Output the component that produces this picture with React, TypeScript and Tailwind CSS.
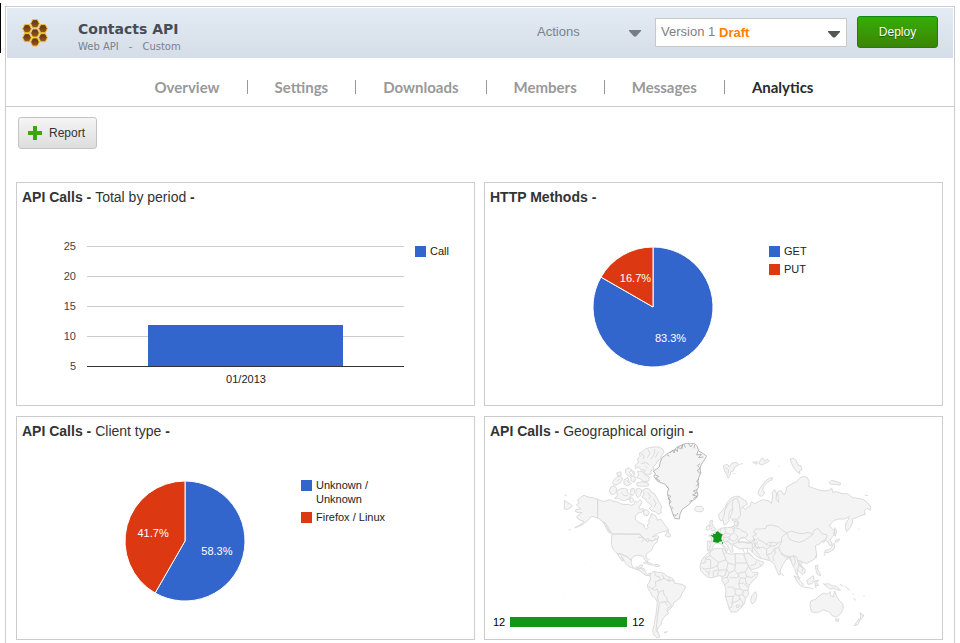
import React from "react";

const BLUE = "#3366cc";
const RED = "#dc3912";

function HoneycombLogo() {
  const cells = [
    [103, 75],
    [79, 90],
    [127, 90],
    [103, 103],
    [79, 117],
    [127, 117],
    [103, 130],
  ];
  return (
    <svg className="h-[30px] w-[28px] shrink-0" viewBox="61 58 84 90" aria-hidden="true">
      <defs>
        <linearGradient id="cell" x1="0" y1="0" x2="0" y2="1">
          <stop offset="0" stopColor="#5e3312" />
          <stop offset="1" stopColor="#985a1c" />
        </linearGradient>
      </defs>
      {cells.map(([x, y]) => (
        <polygon
          key={`${x}-${y}`}
          points={`${x - 13},${y} ${x - 7},${y - 12} ${x + 7},${y - 12} ${x + 13},${y} ${x + 7},${y + 12} ${x - 7},${y + 12}`}
          fill="url(#cell)"
          stroke="#f3bb2c"
          strokeWidth="3"
        />
      ))}
    </svg>
  );
}

function Caret({ className }: { className: string }) {
  return (
    <svg className={className} viewBox="0 0 12 7" aria-hidden="true">
      <path d="M0 0H12V1L7 6.5H5L0 1Z" fill="currentColor" />
    </svg>
  );
}

function Header() {
  return (
    <header className="flex h-[50px] items-center bg-linear-to-b from-[#e3ebf4] to-[#d5dde8] pr-[15px] pl-[14px]">
      <HoneycombLogo />
      <div className="ml-[29px] pt-[10px] font-['DejaVu_Sans',sans-serif]">
        <h1 className="text-[14px] leading-[18px] font-bold text-[#454c5a]">Contacts API</h1>
        <p className="flex gap-[10px] text-[10px] leading-[18px] text-[#7c818a]">
          <span>Web API</span>
          <span>-</span>
          <span>Custom</span>
        </p>
      </div>
      <div className="ml-auto flex items-center pb-[2px] text-[13px]">
        <div className="relative w-[104px]">
          <select
            aria-label="Actions"
            className="h-[32px] w-full appearance-none bg-transparent text-[#7c818a] outline-none"
          >
            <option>Actions</option>
          </select>
          <Caret className="pointer-events-none absolute top-[14px] right-0 h-[7px] w-[12px] text-[#777b82]" />
        </div>
        <div className="relative ml-[14px] w-[192px]">
          <select
            aria-label="Version"
            className="h-[29px] w-full appearance-none border border-[#c8c8c8] bg-white pl-[5px] text-[#808080] outline-none"
          >
            <option>Version 1</option>
          </select>
          <span className="pointer-events-none absolute top-[5px] left-[64px] leading-[19px] font-bold text-[#ff8000]">
            Draft
          </span>
          <Caret className="pointer-events-none absolute top-[13px] right-[7px] h-[7px] w-[12px] text-[#555555]" />
        </div>
        <button
          type="button"
          className="ml-[10px] h-[32px] w-[81px] rounded-[3px] border border-[#0c8a10] bg-linear-to-b from-[#35ad05] to-[#3b8505] text-[12px] text-white [text-shadow:0_1px_1px_#1e5a00]"
        >
          Deploy
        </button>
      </div>
    </header>
  );
}

const tabs = ["Overview", "Settings", "Downloads", "Members", "Messages", "Analytics"];

function Tabs() {
  return (
    <nav className="flex h-[49px] items-center justify-center gap-[27px] border-b border-[#cccccc] pt-[10px] pl-[8px] font-['Lato',sans-serif] text-[15px] font-bold text-[#999999]">
      {tabs.map((tab, i) => (
        <React.Fragment key={tab}>
          {i > 0 && <span className="h-[14px] w-px bg-[#999999]" />}
          <a href={`#${tab.toLowerCase()}`} className={tab === "Analytics" ? "text-[#2b2b2b]" : ""}>
            {tab}
          </a>
        </React.Fragment>
      ))}
    </nav>
  );
}

function Card({ title, detail, children }: { title: string; detail?: string; children: React.ReactNode }) {
  return (
    <section className="h-[224px] border border-[#cccccc]">
      <h2 className="px-[5px] pt-[4px] text-[14px] leading-[20px] font-bold text-[#333333]">
        {title} - {detail && <span className="font-normal">{detail}</span>}
        {detail && " -"}
      </h2>
      {children}
    </section>
  );
}

type Entry = { label: string; color: string };

function Legend({ entries }: { entries: Entry[] }) {
  return (
    <ul className="flex w-[90px] flex-col gap-[4px] text-[11px] leading-[14px] text-[#222222]">
      {entries.map((e) => (
        <li key={e.label} className="flex gap-[4px]">
          <span className="mt-[2px] h-[11px] w-[11px] shrink-0" style={{ backgroundColor: e.color }} />
          {e.label}
        </li>
      ))}
    </ul>
  );
}

function BarChart() {
  const ticks = [25, 20, 15, 10, 5];
  return (
    <div className="flex gap-[10px] pt-[37px]">
      <svg
        className="w-[388px] shrink-0 overflow-visible text-[11px]"
        height="145"
        role="img"
        aria-label="Calls by period"
      >
        {ticks.map((t, i) => (
          <g key={t}>
            <rect x="70" y={2 + i * 30} width="317" height="1" fill={t === 5 ? "#333333" : "#cccccc"} />
            <text x="59" y={6 + i * 30} textAnchor="end" fill="#444444">
              {t}
            </text>
          </g>
        ))}
        <rect x="131" y="81" width="195" height="41" fill={BLUE} />
        <text x="229" y="139" textAnchor="middle" fill="#222222">
          01/2013
        </text>
      </svg>
      <div className="w-[50px] overflow-hidden">
        <Legend entries={[{ label: "Call", color: BLUE }]} />
      </div>
    </div>
  );
}

function PieChart({ first, entries }: { first: number; entries: Entry[] }) {
  const r = 60;
  const c = 60;
  const angle = (first / 100) * 2 * Math.PI;
  const ex = c + r * Math.sin(angle);
  const ey = c - r * Math.cos(angle);
  const labels = [
    { value: first, mid: angle / 2 },
    { value: 100 - first, mid: angle / 2 + Math.PI },
  ];
  return (
    <div className="flex gap-[56px] pt-[37px] pl-[108px]">
      <svg
        className="mt-[3px] h-[120px] w-[120px] overflow-visible text-[11px]"
        viewBox="0 0 120 120"
        role="img"
        aria-label="Share of calls"
      >
        <path
          d={`M${c} ${c}V0A${r} ${r} 0 1 1 ${ex} ${ey}Z`}
          fill={entries[0].color}
          stroke="#ffffff"
          strokeWidth="1"
        />
        <path
          d={`M${c} ${c}L${ex} ${ey}A${r} ${r} 0 0 1 ${c} 0Z`}
          fill={entries[1].color}
          stroke="#ffffff"
          strokeWidth="1"
        />
        {labels.map((l, i) => {
          const d = l.value > 75 || l.value < 25 ? 35 : 33;
          return (
            <text
              key={i}
              x={c + d * Math.sin(l.mid)}
              y={c + 5 - d * Math.cos(l.mid)}
              textAnchor="middle"
              fill="#ffffff"
            >
              {l.value.toFixed(1)}%
            </text>
          );
        })}
      </svg>
      <Legend entries={entries} />
    </div>
  );
}

const westLand = [
  // Alaska and its peninsula
  "M113 177L98 172 85 170 72 165 62 171 53 178 57 187 49 194 57 200 62 206 48 208 46 213 55 217 66 216 60 222 50 228 53 235 62 240 72 243 66 250 55 256 44 262 50 261 66 254 76 246 84 240 88 234 96 228 104 230 113 234Z",
  "M13 180L22 186 32 192 38 197 30 203 22 207 13 206Z",
  "M13 164L20 166M26 270L32 268M76 373h1M236 424h1M13 465h1",
  // Canada
  "M113 177L122 181 134 183 148 178 158 182 170 184 182 190 195 193 206 192 214 195 222 192 226 182 232 186 240 178 246 186 240 196 236 204 240 207 250 204 252 210 244 216 234 218 228 226 226 236 232 244 244 250 252 254 254 262 260 268 264 262 262 254 268 246 266 238 272 230 274 220 284 224 290 232 292 240 302 236 308 244 316 256 324 264 320 272 308 274 296 278 284 284 276 290 290 286 296 288 294 296 286 296 278 302 268 300 262 304 254 296 246 290 240 282 156 281 148 272 142 262 134 252 126 242 118 236 113 234Z",
  "M315 285L322 276 325 268 326 279 332 282 331 289 323 290Z",
  "M130 244L138 250 146 264 154 278 146 276 138 262Z",
  // Arctic islands
  "M152 140L164 136 170 146 168 156 160 164 152 160 148 152Z",
  "M170 152L180 146 194 144 204 148 200 156 208 160 214 166 208 174 198 180 186 180 176 174 164 174 172 166Z",
  "M212 146L222 144 224 156 218 166 212 160ZM228 146L238 144 246 150 242 164 234 172 228 164ZM206 176L216 172 222 180 214 188Z",
  "M248 150L258 144 268 146 274 156 284 160 290 172 298 186 306 200 302 208 304 218 294 222 286 214 276 212 268 204 276 198 270 190 262 186 256 176 246 170 252 162Z",
  "M250 210L260 208 268 216 262 226 252 224Z",
  "M158 124L168 112 180 106 188 116 180 128 168 134 160 132ZM170 98L182 94 184 104 174 108ZM192 118L204 112 208 124 214 130 202 136 192 132ZM212 110L222 106 228 116 222 126 214 122ZM230 128L246 124 264 128 266 136 248 138 232 136ZM196 88L206 82 214 88 208 98 216 104 206 108 198 100ZM214 90L224 96 222 104Z",
  "M226 74L236 66 232 56 240 48 238 38 248 34 256 26 268 22 282 20 296 20 308 26 312 36 304 46 302 56 292 62 288 72 280 78 282 86 272 92 274 100 262 104 250 96 256 90 242 88 236 80 226 84Z",
  "M232 94L246 92 254 102 268 110 266 122 252 124 242 116 230 112 236 104Z",
  // United States, Mexico, Central America, Caribbean
  "M156 281H240L246 290 254 296 262 304 268 300 278 302 286 296 294 296 292 304 284 312 278 320 276 328 266 336 258 342 258 350 264 358 262 366 254 358 250 348 240 346 232 344 222 348 216 352 214 360 206 354 200 348 194 346 186 342 172 340 160 328 154 312 155 296Z",
  "M172 340L186 342 194 346 200 348 206 354 214 360 214 370 218 380 226 384 236 380 240 374 248 374 244 382 238 386 232 388 220 384 208 380 198 370 192 360 184 348 190 362 186 362 178 350Z",
  "M232 388L240 382 254 386 256 396 262 402 272 398 270 406 258 405 248 398 240 392Z",
  "M250 368L260 364 272 369 280 374 270 374 260 369ZM282 374L292 372 300 377 286 379ZM266 354L270 358",
  // South America
  "M272 400L282 392 292 396 304 396 312 400 322 408 334 412 342 420 342 428 354 430 366 432 377 438 374 448 366 458 362 470 352 480 342 486 338 498 328 508 322 514 326 520 318 524 310 534 304 544 304 552 296 560 292 570 296 580 300 590 290 592 282 584 278 570 282 556 284 540 288 524 290 506 292 486 286 474 276 466 270 454 264 444 262 434 268 426 272 416 270 408Z",
  "M312 576L322 574 316 578Z",
  "M404 204L410 198 424 198 432 206 426 214 412 214 404 210Z",
];

const westBorders = [
  "M283 393L286 406 298 410 300 420 286 424 288 436 276 446 266 438M300 420L312 414 306 402M312 414L322 420 330 412M322 420L342 420M322 420L330 424",
  "M276 446L284 450 292 446 296 462 292 470 296 486M296 456L310 450 312 464 320 470 322 484 312 484 298 488M322 484L330 488 334 498 324 502 320 512M298 488L296 506 292 530 290 552 288 572 296 580M312 484L324 496M234 292L248 290 252 298 244 306M258 296L268 296M228 378L232 386M244 384L250 392",
];

const greenland =
  "M300 68L306 52 320 42 332 34 344 28 352 20 366 14 378 9 402 9 412 18 416 32 430 40 440 48 432 60 424 72 420 84 422 98 416 112 414 126 416 140 410 150 414 164 408 174 396 182 388 192 376 200 366 208 360 222 358 236 344 234 338 220 334 206 328 192 328 180 324 168 322 156 326 146 316 132 300 126 290 120 282 108 286 100 280 92 290 86 298 80Z";

const greenlandCoast = [
  "M320 42L328 48M330 38L338 30 342 38 346 26 352 34 354 20 362 26 368 13 366 26M372 12L376 22M386 10L392 20 398 12M404 14L402 24",
  "M414 32L410 44 424 42 416 52 430 50M420 70L412 76 420 84 412 90 420 100M416 116L410 122 416 130 408 138M412 148L400 152 410 158 398 164 412 168 400 174M396 180L388 184M286 104L296 108 288 114 300 122M320 138L326 144M324 164L332 168 326 176 334 184 328 190M334 200L340 204M340 222L348 226 354 218",
];

const eastLand = [
  // Eurasia
  "M28 234L26 222 36 212 46 200 52 186 62 174 74 168 88 168 98 176 108 182 112 192 104 196 98 200 106 208 112 200 120 198 124 184 134 190 146 184 158 178 168 180 178 182 184 190 188 170 186 156 194 148 200 160 198 176 206 186 204 168 202 156 212 150 222 164 228 154 230 140 246 130 260 124 268 114 280 108 292 112 298 124 296 138 306 142 318 146 330 150 344 152 356 150 366 144 368 156 380 154 396 160 412 160 428 172 446 174 460 178 472 186 482 200 482 210 470 204 462 212 466 222 452 226 440 232 426 236 428 246 420 262 410 274 406 262 408 248 414 238 418 228 404 236 386 236 372 240 362 250 358 258 366 264 374 272 372 284 364 294 360 300 366 308 364 316 358 314 354 304 346 300 342 306 334 304 330 310 316 316 318 330 320 344 314 356 300 364 288 370 280 366 272 370 276 380 286 388 284 398 276 402 268 394 262 388 262 402 270 416 266 414 258 398 254 384 248 376 244 362 236 354 228 358 218 374 210 392 212 402 206 404 200 390 194 374 188 366 178 360 168 358 152 354 142 350 136 344 130 338 122 330 118 324 102 324 90 326 80 320 70 314 66 322 70 332 64 338 58 328 52 316 42 304 36 310 46 320 54 328 50 334 44 324 34 312 26 308 18 308 10 316 6 328 -6 332 -8 326 -8 302 6 302 4 292 -4 286 12 278 22 270 32 264 44 262 54 262 66 260 74 254 72 246 80 238 74 236 66 238 60 230 66 216 68 206 60 212 56 226 58 240 50 250 42 254 40 240 32 242Z",
  // British Isles
  "M0 242L8 240 6 250 12 260 18 268 6 272 2 268 6 262 0 254ZM-10 258L-2 254 0 264 -6 270 -12 266Z",
  // Arabia
  "M102 346L108 338 120 340 130 352 140 358 150 362 162 366 156 376 140 384 126 388 118 380 108 364Z",
  // Novaya Zemlya, Svalbard, Severnaya Zemlya and nearby islands
  "M148 166L144 156 150 144 158 132 166 122 178 114 188 112 186 118 172 126 162 136 158 148 164 158 156 168Z",
  "M40 76L52 72 58 80 66 68 80 66 86 74 74 80 70 92 62 94 60 106 54 114 50 102 44 92ZM88 72L98 70M70 100h6M128 66L142 64 140 72ZM146 70L152 58 158 52 164 62 172 56 178 62 168 68 156 74ZM46 82L56 88 54 100M206 78h3",
  "M240 56L250 54 258 60 264 74 272 76 276 88 268 92 270 100 260 94 252 84 246 72Z",
  "M358 126L366 120 378 124 392 128 390 134 376 132 362 132ZM464 164L474 166",
  // Sakhalin, Japan
  "M374 262L380 272 376 288 372 280ZM376 300L390 296 382 306 376 306ZM372 308L374 320 368 330 356 336 344 338 346 330 358 328 366 318ZM342 340L346 346",
  // Islands of south-east Asia
  "M252 406L262 412 272 424 280 432 278 440 266 430 258 418ZM280 440L296 442 310 446M290 420L302 412 310 406 312 418 306 430 294 432ZM314 422L326 420 320 426 326 436 316 434 318 442ZM316 376L324 376 322 386 330 398 332 406 322 402 318 390ZM318 346L320 352ZM338 428L344 434M342 432L356 430 366 436 380 438 392 450 380 448 370 444 358 446 350 438ZM390 432L400 438M404 438L420 450M428 460L432 464M460 468L464 466M430 474L438 480M216 400L220 406Z",
  // Australia and New Zealand
  "M302 482L318 476 328 466 342 458 352 462 360 454 362 466 370 470 374 452 380 468 388 480 398 490 400 504 392 520 380 530 366 526 360 516 350 512 340 508 326 516 310 516 304 514 300 498Z",
  "M376 536L386 536 384 544 378 542ZM450 516L456 524 462 524 456 534 450 538 452 528ZM446 536L450 542 442 554 432 556 440 546Z",
  "M446 266L450 268",
];

const eastBorders = [
  // Nordic and Russian frontier
  "M36 240L42 228 44 210 54 192 68 178 86 172 86 168M68 206L66 192 70 180M98 200L90 208 88 192 82 176M90 208L92 224 82 238 86 250 80 262M66 240L84 246 82 254 66 260 72 272",
  // Central and eastern Europe
  "M44 262L48 278 62 282 72 278 72 262M72 262L90 266 96 272 108 276 114 284 104 292 92 292M32 264L30 280 26 288 26 308M48 278L38 284 42 292 56 290 64 284M56 290L62 298 72 304 80 296 84 290 76 280M42 292L40 302 56 304 62 312 74 310 84 304 86 296M62 298L54 298 50 306M12 290L28 288M84 308L98 304 114 306 128 310 126 322M22 272L28 278M-2 304L2 312 -4 330M20 308L2 304",
  // Caspian region, Kazakhstan, central Asia
  "M124 306L132 296 128 288 140 282 132 276 136 266 152 266 168 264 170 256 186 254 206 260 214 268 230 278 220 286 214 292 216 302 204 308 190 306 176 306 168 312 158 304 148 300 142 292M130 296L136 304 136 318 148 324 158 320 170 326 182 318 182 308M136 318L128 322M168 312L182 318 196 316 204 308M170 326L170 344 176 350 178 360M170 344L184 340 194 324 206 322M130 322L140 334 152 352M194 324L196 338 188 350 192 362",
  // Mongolia, China, India
  "M230 278L244 272 262 278 278 280 296 276 308 282 296 292 284 300 268 306 250 302 238 296 230 278M308 282L312 270 324 264 336 280 352 284 348 296M206 322L212 336 224 344 240 350 250 346 260 350 262 360 272 362 280 366M216 302L206 322M212 340L226 350 240 352M240 346L244 362M250 346L256 364 252 376M262 360L268 374 262 388M272 362L266 372 280 382 276 394M268 374L278 384M334 304L348 296",
  // Arabia and the Levant
  "M98 324L104 340M112 326L114 338 124 346M126 322L128 336M140 360L136 372 122 376M154 376L146 368",
];

const africa = [
  "M684 428L694 422 704 414 724 414 734 416 738 426 752 432 768 430 790 430 796 446 802 460 808 474 818 486 834 486 830 500 818 512 808 524 804 540 806 552 796 564 794 578 784 592 770 604 754 606 748 596 742 576 736 558 738 540 734 524 726 510 726 498 716 496 700 502 686 502 672 492 662 480 660 468 664 452 672 440Z",
  "M816 556L826 544 831 556 824 576 816 580 812 570Z",
];

const africaBorders = [
  "M690 424L690 436 676 442M690 436L716 456 738 448 732 432 726 416M732 432L740 426M676 442L676 456 664 460M676 446L692 448 692 474 674 476 664 472M716 456L712 466 694 474M738 448L744 458 766 464 766 430M766 458H800M744 458L740 478 716 480 712 466M766 464L764 480 772 490 796 484 804 470M740 478L748 488 764 480M716 480L712 496M700 482L700 500M688 480L686 498M700 482L712 480M676 480L686 490M740 478L736 494 726 500M748 488L742 500 730 504M748 502L770 502 778 498 772 490M796 484L800 498 816 502 828 490M800 498L796 504 782 502 776 520 780 536 764 536 758 530 742 530M742 500L746 514 734 524M796 504L798 518 808 524M776 520L790 518 804 530M780 536L790 540 804 540M790 540L788 552 776 556 766 552 764 536M736 558L760 558 766 552M760 558L756 578 756 590 746 594M756 578L772 572 780 566 776 556M780 566L788 576 784 592M788 552L796 564M770 584L778 584 776 592 768 590Z",
];

function WorldMap() {
  return (
    <svg
      className="ml-[78px] h-[197px] w-[310px]"
      viewBox="249 98 930 591"
      role="img"
      aria-label="World map with France highlighted"
    >
      <g fill="#f4f4f4" stroke="#dbdbdb" strokeWidth="3" strokeLinejoin="round">
        <g transform="translate(240 90)">
          <path d={westLand.join("")} />
          <path d={westBorders.join("")} fill="none" />
          <path
            d="M242 40L252 46 250 56M264 28L270 40 262 52M284 26L282 44 272 56M296 34L286 52M244 70L258 66 268 74M262 84L256 78M180 116L172 122M200 120L206 128M184 156L192 166 204 166M262 156L272 168 266 176M280 176L288 190 282 200"
            fill="none"
          />
          <path d={greenland} stroke="#b8b8b8" />
          <path d={greenlandCoast.join("")} fill="none" stroke="#9c9c9c" strokeWidth="2" />
        </g>
        <g transform="translate(690 90)">
          <path d={eastLand.join("")} />
          <path d="M84 304L92 294 104 292 112 300 124 306 112 309 98 305ZM130 300L136 296 142 304 140 312 148 322 140 324 134 314Z" fill="#ffffff" />
          <path d={eastBorders.join("")} fill="none" />
        </g>
        <path d={africa.join("")} />
        <path d={africaBorders.join("")} fill="none" />
      </g>
      <path
        d="M691 374L700 375 699 370 706 371 708 365 714 363 720 369 728 372 725 380 724 386 727 393 718 394 714 398 706 396 699 394 701 383 697 379ZM726 396h3v4h-3Z"
        fill="#109618"
      />
    </svg>
  );
}

function GeoChart() {
  return (
    <div className="relative pt-[2px]">
      <WorldMap />
      <div className="absolute bottom-[11px] left-[8px] flex items-center gap-[5px] text-[11px] leading-[14px] text-black">
        <span>12</span>
        <span className="h-[10px] w-[117px] bg-[#109618]" />
        <span>12</span>
      </div>
    </div>
  );
}

export default function App() {
  return (
    <div className="flex min-h-screen bg-white font-['Liberation_Sans',Arial,sans-serif]">
      <div className="mt-[3px] h-[50px] w-px bg-black" />
      <div className="mt-[6px] mr-[5px] ml-[4px] flex-1 border-x border-t border-[#cccccc]">
        <div className="px-px pt-px">
          <Header />
        </div>
        <Tabs />
        <main className="pt-[10px] pr-[11px] pb-[3px] pl-[10px]">
          <button
            type="button"
            className="ml-[2px] flex h-[32px] w-[79px] items-center gap-[7px] rounded-[3px] border border-[#c4c4c4] bg-linear-to-b from-[#f5f5f5] to-[#dddddd] pl-[9px] text-[12px] text-[#333333]"
          >
            <svg className="h-[14px] w-[14px]" viewBox="0 0 14 14" aria-hidden="true">
              <path d="M5 0H9V5H14V9H9V14H5V9H0V5H5Z" fill="#3da60c" />
            </svg>
            Report
          </button>
          <div className="mt-[33px] grid grid-cols-2 gap-x-[9px] gap-y-[10px]">
            <Card title="API Calls" detail="Total by period">
              <BarChart />
            </Card>
            <Card title="HTTP Methods">
              <PieChart
                first={83.3}
                entries={[
                  { label: "GET", color: BLUE },
                  { label: "PUT", color: RED },
                ]}
              />
            </Card>
            <Card title="API Calls" detail="Client type">
              <PieChart
                first={58.3}
                entries={[
                  { label: "Unknown / Unknown", color: BLUE },
                  { label: "Firefox / Linux", color: RED },
                ]}
              />
            </Card>
            <Card title="API Calls" detail="Geographical origin">
              <GeoChart />
            </Card>
          </div>
        </main>
      </div>
    </div>
  );
}
